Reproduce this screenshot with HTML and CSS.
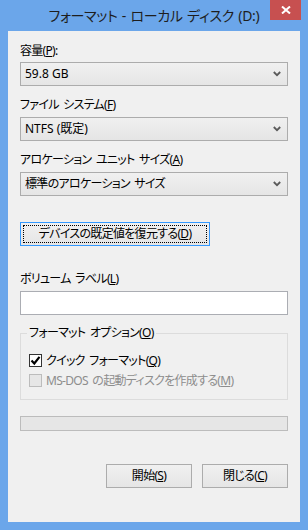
FILE: index.html
```html
<!DOCTYPE html>
<html lang="ja">
<head>
    <meta charset="UTF-8">
    <title>フォーマット - ローカル ディスク (D:)</title>
    <link rel="stylesheet" href="styles.css">
</head>
<body>
    <div class="window">
        <div class="titlebar">
            <div class="title">フォーマット - ローカル ディスク (D:)</div>
            <div class="close-btn">
                <svg width="10" height="8" viewBox="0 0 10 8">
                    <path d="M1 0.5 L9 7.5 M9 0.5 L1 7.5" stroke="#fff" stroke-width="2" fill="none"/>
                </svg>
            </div>
        </div>

        <div class="client">
            <!-- capacity -->
            <div class="label first">容量(<u>P</u>):</div>
            <div class="combo">
                <span>59.8 GB</span>
                <svg class="arrow" width="8" height="6" viewBox="0 0 8 6"><path d="M0.8 1 L4 4.2 L7.2 1" stroke="#5a5a5a" stroke-width="1.8" fill="none"/></svg>
            </div>

            <!-- file system -->
            <div class="label">ファイル システム(<u>F</u>)</div>
            <div class="combo">
                <span>NTFS (既定)</span>
                <svg class="arrow" width="8" height="6" viewBox="0 0 8 6"><path d="M0.8 1 L4 4.2 L7.2 1" stroke="#5a5a5a" stroke-width="1.8" fill="none"/></svg>
            </div>

            <!-- allocation unit -->
            <div class="label">アロケーション ユニット サイズ(<u>A</u>)</div>
            <div class="combo">
                <span class="jp">標準のアロケーション サイズ</span>
                <svg class="arrow" width="8" height="6" viewBox="0 0 8 6"><path d="M0.8 1 L4 4.2 L7.2 1" stroke="#5a5a5a" stroke-width="1.8" fill="none"/></svg>
            </div>

            <button class="btn btn-restore" type="button">デバイスの既定値を復元する(<u>D</u>)</button>

            <div class="label label-volume">ボリューム ラベル(<u>L</u>)</div>
            <div class="textbox"></div>

            <fieldset class="options">
                <legend>フォーマット オプション(<u>O</u>)</legend>
                <div class="check-row">
                    <span class="checkbox checked">
                        <svg width="11" height="11" viewBox="0 0 11 11"><path d="M1.5 5.5 L4.3 8.5 L9.5 1.8" stroke="#000" stroke-width="2.2" fill="none"/></svg>
                    </span>
                    <span>クイック フォーマット(<u>Q</u>)</span>
                </div>
                <div class="check-row disabled">
                    <span class="checkbox"></span>
                    <span>MS-DOS の起動ディスクを作成する(<u>M</u>)</span>
                </div>
            </fieldset>

            <div class="progress"></div>

            <div class="actions">
                <button class="btn" type="button">開始(<u>S</u>)</button>
                <button class="btn" type="button">閉じる(<u>C</u>)</button>
            </div>
        </div>
    </div>
</body>
</html>
```

FILE: styles.css
```css
body {
    margin: 0;
    font-family: "Noto Sans", "Noto Sans CJK JP", sans-serif;
    font-size: 12px;
    font-feature-settings: "palt";
    color: #000;
}

.window {
    width: 308px;
    height: 530px;
    background-color: #6ba6ea;
    display: flex;
    flex-direction: column;
    box-sizing: border-box;
}

.titlebar {
    position: relative;
    height: 31px;
    flex: none;
}

.title {
    text-align: center;
    font-size: 14px;
    letter-spacing: -0.3px;
    word-spacing: 1px;
    line-height: 20px;
    padding-top: 6px;
    color: #1e1e1e;
}

.close-btn {
    position: absolute;
    top: 0;
    right: 7px;
    width: 31px;
    height: 20px;
    background-color: #c75050;
    display: flex;
    align-items: center;
    justify-content: center;
}

.client {
    flex: 1;
    margin: 0 8px 8px;
    background-color: #f0f0f0;
    padding: 0 12px;
    display: flex;
    flex-direction: column;
}

.label,
.jp,
.btn,
.options legend,
.check-row {
    letter-spacing: -0.7px;
    word-spacing: 2px;
}

.label {
    line-height: 16px;
    height: 16px;
    margin-top: 11px;
    margin-bottom: 4px;
    white-space: nowrap;
}

.label.first {
    margin-top: 12px;
    margin-bottom: 3px;
}

.combo {
    height: 24px;
    box-sizing: border-box;
    border: 1px solid #acacac;
    background: linear-gradient(#f0f0f0, #e5e5e5);
    display: flex;
    align-items: center;
    justify-content: space-between;
    padding: 0 6px 0 4px;
    line-height: 16px;
}

.combo .arrow {
    flex: none;
}

.btn {
    font-family: inherit;
    font-size: 12px;
    font-feature-settings: "palt";
    color: #000;
    height: 24px;
    box-sizing: border-box;
    border: 1px solid #acacac;
    background: linear-gradient(#f0f0f0, #e5e5e5);
    padding: 0;
    line-height: 16px;
    margin: 0;
}

.btn-restore {
    margin-top: 26px;
    width: 190px;
    border-color: #3399ff;
    outline: 1px dotted #000;
    outline-offset: -4px;
}

.label-volume {
    margin-top: 25px;
}

.textbox {
    height: 24px;
    box-sizing: border-box;
    background-color: #fff;
    border: 1px solid #abadb3;
}

.options {
    margin: 10px 0 0;
    padding: 9px 8px 9px;
    border: 1px solid #dcdcdc;
    min-width: 0;
}

.options legend {
    padding: 0 2px;
    margin-left: -2px;
    line-height: 16px;
}

.check-row {
    height: 20px;
    display: flex;
    align-items: center;
    gap: 4px;
    white-space: nowrap;
}

.checkbox {
    width: 13px;
    height: 13px;
    box-sizing: border-box;
    border: 1px solid #bcbcbc;
    background-color: #e6e6e6;
    display: flex;
    align-items: center;
    justify-content: center;
    flex: none;
}

.checkbox.checked {
    border-color: #333;
    background-color: #fff;
}

.check-row.disabled {
    color: #8d8d8d;
}

.progress {
    margin-top: 16px;
    height: 15px;
    box-sizing: border-box;
    border: 1px solid #bcbcbc;
    background-color: #e6e6e6;
}

.actions {
    margin-top: 33px;
    display: flex;
    justify-content: flex-end;
    gap: 10px;
}

.actions .btn {
    width: 86px;
}
```
